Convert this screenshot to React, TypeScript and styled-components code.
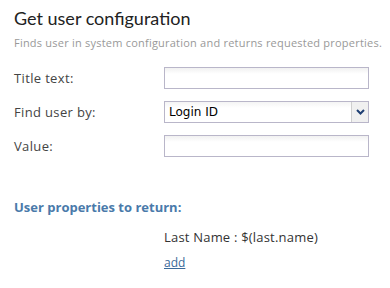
import { createGlobalStyle } from 'styled-components';
import styled from 'styled-components';

const GlobalStyle = createGlobalStyle`
  body {
    margin: 0;
    background: #ffffff;
    font-family: "Open Sans", "DejaVu Sans", sans-serif;
  }
`;

function App() {
  return (
    <>
      <GlobalStyle />
      <StPanel>
        <StTitle>Get user configuration</StTitle>
        <StSubtitle>Finds user in system configuration and returns requested properties.</StSubtitle>
        <StForm>
          <StLabel htmlFor='title'>Title text:</StLabel>
          <StInput id='title' type='text' />
          <StLabel htmlFor='findby'>Find user by:</StLabel>
          <StSelectBox id='findby'>
            <StSelectValue>Login ID</StSelectValue>
            <StSelectArrow>
              <svg width='9' height='6' viewBox='0 0 9 6'>
                <path d='M1 1 L4.5 4.5 L8 1' fill='none' stroke='#1f3f73' strokeWidth='2' />
              </svg>
            </StSelectArrow>
          </StSelectBox>
          <StLabel htmlFor='value'>Value:</StLabel>
          <StInput id='value' type='text' />
        </StForm>
        <StSection>User properties to return:</StSection>
        <StProps>
          <StProp>Last Name : $(last.name)</StProp>
          <StAdd href='#'>add</StAdd>
        </StProps>
      </StPanel>
    </>
  );
}

export default App;

const StPanel = styled.div`
  width: 390px;
  height: 288px;
  padding: 7px 0 0 14px;
  box-sizing: border-box;
  color: #333333;
`;

const StTitle = styled.h1`
  margin: 0;
  font-family: "Lato", sans-serif;
  font-size: 18px;
  font-weight: normal;
  line-height: 22px;
  color: #222222;
`;

const StSubtitle = styled.p`
  margin: 7px 0 0 0;
  font-size: 11px;
  letter-spacing: 0.22px;
  line-height: 14px;
  color: #999999;
`;

const StForm = styled.div`
  display: grid;
  grid-template-columns: 150px 205px;
  row-gap: 12px;
  align-items: center;
  margin-top: 17px;
`;

const StLabel = styled.label`
  font-size: 13px;
  letter-spacing: 0.35px;
  color: #444444;
`;

const StInput = styled.input`
  box-sizing: border-box;
  width: 205px;
  height: 22px;
  margin: 0;
  border: 1px solid #b9b6c9;
  background: linear-gradient(#f1f1f1, #ffffff 6px);
  outline: none;
`;

const StSelectBox = styled.div`
  box-sizing: border-box;
  width: 205px;
  height: 22px;
  border: 1px solid #b9b6c9;
  display: flex;
  align-items: stretch;
  background: linear-gradient(#f4f4f4, #ffffff 6px);
`;

const StSelectValue = styled.span`
  flex: 1;
  padding-left: 4px;
  font-family: "DejaVu Sans", sans-serif;
  font-size: 12px;
  line-height: 20px;
  color: #000000;
`;

const StSelectArrow = styled.span`
  width: 16px;
  border-left: 1px solid #cfcfcf;
  background: #f0f0f0;
  display: flex;
  align-items: center;
  justify-content: center;
`;

const StSection = styled.div`
  margin-top: 41px;
  font-size: 13px;
  font-weight: bold;
  color: #4a7aaa;
`;

const StProps = styled.div`
  display: flex;
  flex-direction: column;
  align-items: flex-start;
  gap: 8px;
  padding-left: 150px;
  margin-top: 12px;
`;

const StProp = styled.span`
  font-size: 13px;
  letter-spacing: 0.2px;
  color: #333333;
`;

const StAdd = styled.a`
  font-size: 12px;
  color: #3a6a9a;
`;
